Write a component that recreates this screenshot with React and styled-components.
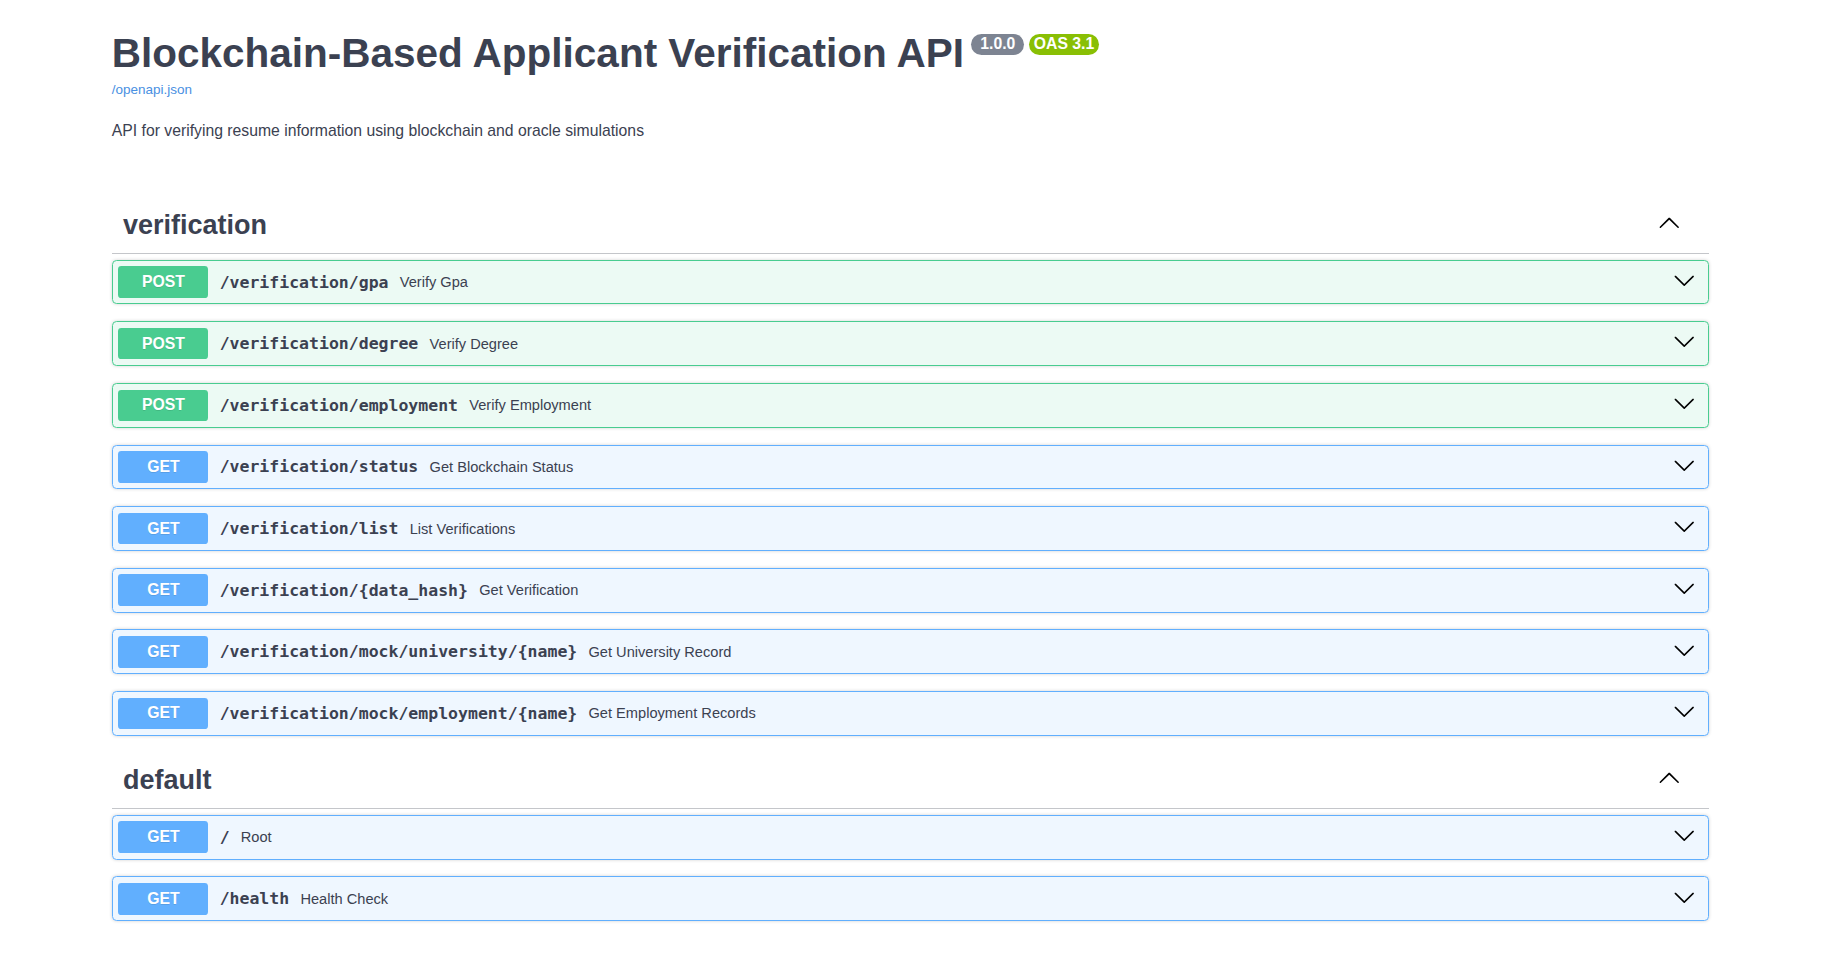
import React from 'react';
import styled, { createGlobalStyle } from 'styled-components';

// Estilos globais
const GlobalStyle = createGlobalStyle`
  body {
    margin: 0;
    background: #ffffff;
    color: #3b4151;
    font-family: "Liberation Sans", Arial, sans-serif;
  }
`;

const methodColors = {
  post: { main: '#49cc90', soft: 'rgba(73, 204, 144, 0.1)' },
  get: { main: '#61affe', soft: 'rgba(97, 175, 254, 0.1)' },
};

// Container principal
const Wrapper = styled.div`
  max-width: 1642.5px;
  margin: 0 auto;
  padding: 30px 22.5px 40px;
  box-sizing: border-box;
`;

// Bloco de informações
const Info = styled.div`
  margin-bottom: 58px;
`;

const Title = styled.h2`
  display: flex;
  align-items: flex-start;
  margin: 0;
  font-size: 40.5px;
  font-weight: 700;
  line-height: normal;
  color: #3b4151;
`;

const Stamp = styled.small`
  margin-top: 3.5px;
  margin-left: ${({ $first }) => ($first ? '7.5px' : '5px')};
  padding: 2.25px 4.5px;
  border-radius: 57px;
  background: ${({ $color }) => $color};
  font-size: 15.75px;
  line-height: 16.5px;
  color: #ffffff;
  white-space: pre;
`;

const SpecLink = styled.a`
  display: inline-block;
  margin-top: 5px;
  font-size: 13.5px;
  color: #4990e2;
  text-decoration: none;
`;

const Description = styled.p`
  margin: 23.5px 0 0;
  font-size: 15.75px;
  line-height: normal;
`;

// Seção de tags
const TagSection = styled.section`
  display: flex;
  flex-direction: column;
`;

const TagHeader = styled.h3`
  display: flex;
  align-items: center;
  margin: 0 0 5.625px;
  padding: 11.25px 22.5px 11.25px 11.25px;
  border-bottom: 1px solid rgba(59, 65, 81, 0.3);
  font-size: 27px;
  font-weight: 700;
  line-height: 33px;
  color: #3b4151;
`;

const TagName = styled.span`
  flex: 1;
`;

const ArrowButton = styled.button`
  display: flex;
  align-items: center;
  padding: 0 6.75px;
  border: none;
  background: none;
  cursor: pointer;

  svg {
    display: block;
    width: 22.5px;
    height: 22.5px;
    margin-bottom: ${({ $lift }) => $lift}px;
  }
`;

// Bloco de operação
const Operation = styled.div`
  margin-bottom: 16.875px;
  border: 1px solid ${({ $method }) => methodColors[$method].main};
  border-radius: 4.5px;
  background: ${({ $method }) => methodColors[$method].soft};
  box-shadow: 0 0 3.375px rgba(0, 0, 0, 0.19);
`;

const Summary = styled.div`
  display: flex;
  align-items: center;
  padding: 5.625px;
  cursor: pointer;
`;

const Method = styled.span`
  min-width: 90px;
  padding: 6.75px 0;
  border-radius: 3.375px;
  background: ${({ $method }) => methodColors[$method].main};
  color: #ffffff;
  font-size: 15.75px;
  font-weight: 700;
  line-height: 18px;
  text-align: center;
  text-shadow: 0 1px 0 rgba(0, 0, 0, 0.1);
`;

const Path = styled.span`
  padding: 0 11.25px;
  font-family: "DejaVu Sans Mono", monospace;
  font-size: 16.5px;
  font-weight: 700;
  color: #3b4151;
`;

const Summ = styled.span`
  flex: 1;
  font-size: 14.625px;
  color: #3b4151;
`;

const ArrowDown = () => (
  <svg viewBox="0 0 20 20" aria-hidden="true">
    <path d="M17.418 6.109c.272-.268.709-.268.979 0s.271.701 0 .969l-7.908 7.83c-.27.268-.707.268-.979 0l-7.908-7.83c-.27-.268-.27-.701 0-.969.271-.268.709-.268.979 0L10 13.25l7.418-7.141z" />
  </svg>
);

const ArrowUp = () => (
  <svg viewBox="0 0 20 20" aria-hidden="true">
    <path d="M17.418 14.908c.272.268.709.268.979 0s.271-.701 0-.969l-7.908-7.83c-.27-.268-.707-.268-.979 0l-7.908 7.83c-.27.268-.27.701 0 .969.271.268.709.268.979 0L10 7.702l7.418 7.206z" />
  </svg>
);

const tags = [
  {
    name: 'verification',
    ops: [
      { method: 'post', path: '/verification/gpa', summary: 'Verify Gpa' },
      { method: 'post', path: '/verification/degree', summary: 'Verify Degree' },
      { method: 'post', path: '/verification/employment', summary: 'Verify Employment' },
      { method: 'get', path: '/verification/status', summary: 'Get Blockchain Status' },
      { method: 'get', path: '/verification/list', summary: 'List Verifications' },
      { method: 'get', path: '/verification/{data_hash}', summary: 'Get Verification' },
      { method: 'get', path: '/verification/mock/university/{name}', summary: 'Get University Record' },
      { method: 'get', path: '/verification/mock/employment/{name}', summary: 'Get Employment Records' },
    ],
  },
  {
    name: 'default',
    ops: [
      { method: 'get', path: '/', summary: 'Root' },
      { method: 'get', path: '/health', summary: 'Health Check' },
    ],
  },
];

const App = () => (
  <>
    <GlobalStyle />
    <Wrapper>
      <Info>
        <Title>
          Blockchain-Based Applicant Verification API
          <Stamp $first $color="#7d8492">{' 1.0.0 '}</Stamp>
          <Stamp $color="#89bf04">OAS 3.1</Stamp>
        </Title>
        <SpecLink href="#">/openapi.json</SpecLink>
        <Description>API for verifying resume information using blockchain and oracle simulations</Description>
      </Info>

      {tags.map(tag => (
        <TagSection key={tag.name}>
          <TagHeader>
            <TagName>{tag.name}</TagName>
            <ArrowButton $lift={5.5}>
              <ArrowUp />
            </ArrowButton>
          </TagHeader>
          {tag.ops.map(op => (
            <Operation key={op.method + op.path} $method={op.method}>
              <Summary>
                <Method $method={op.method}>{op.method.toUpperCase()}</Method>
                <Path>{op.path}</Path>
                <Summ>{op.summary}</Summ>
                <ArrowButton $lift={4}>
                  <ArrowDown />
                </ArrowButton>
              </Summary>
            </Operation>
          ))}
        </TagSection>
      ))}
    </Wrapper>
  </>
);

export default App;
